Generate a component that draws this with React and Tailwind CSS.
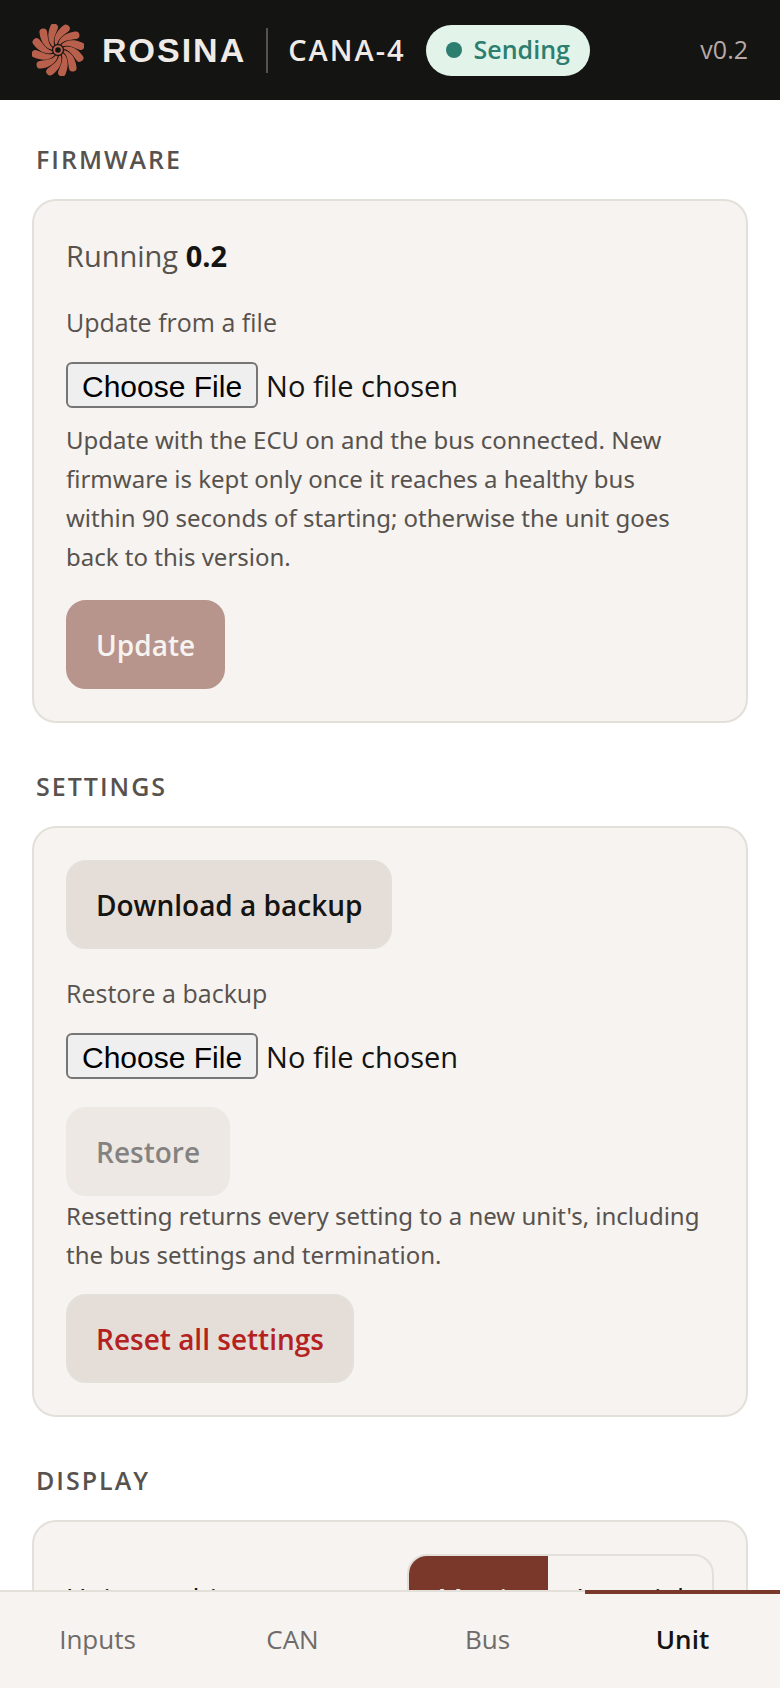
import { useState } from 'react'

const TABS = ['Inputs', 'CAN', 'Bus', 'Unit']
const PETALS = [0, 30, 60, 90, 120, 150, 180, 210, 240, 270, 300, 330]

function Logo() {
  return (
    <svg viewBox="-26 -26 52 52" className="w-[52px] h-[52px] shrink-0" aria-hidden="true">
      {PETALS.map((angle) => (
        <path
          key={angle}
          transform={`rotate(${angle})`}
          fill="#b8604c"
          d="M0.3 -6.2 C1.5 -12 7 -17.2 16.900 -18.500 A3.800 3.800 0 0 1 18.300 -10.900 C11 -10 6 -9.600 2.200 -5.600 Z"
        />
      ))}
      <circle r="3.800" fill="#141412" stroke="#b8604c" strokeWidth="2" />
    </svg>
  )
}

function Section({ title, children }) {
  return (
    <section className="mb-11">
      <h2 className="px-1 mb-5 text-[25px] leading-[39px] font-semibold tracking-[2px] uppercase text-[#57524e]">
        {title}
      </h2>
      <div className="p-8 border-2 border-[#e3e0da] rounded-3xl bg-[#f6f3f0]">
        {children}
      </div>
    </section>
  )
}

function FileField({ id, label }) {
  return (
    <div>
      <label htmlFor={id} className="block mb-5 text-[25px] leading-[39px] text-[#57524e]">
        {label}
      </label>
      <input
        id={id}
        type="file"
        className="block w-full h-[46px] text-[29px] text-[#141412] file:h-[46px] file:mr-2 file:px-[14px] file:pb-1 file:border-2 file:border-solid file:border-[#767676] file:rounded-md file:bg-[#efefef] file:font-['Liberation_Sans',sans-serif] file:text-[30px] file:text-black"
      />
    </div>
  )
}

function Hint({ className, children }) {
  return (
    <p className={`pr-2 font-['Noto_Sans',sans-serif] text-2xl leading-[39px] text-[#57524e] ${className}`}>
      {children}
    </p>
  )
}

function Button({ className, ...props }) {
  return (
    <button
      type="button"
      className={`block h-[89px] px-7 border-2 rounded-[20px] text-[28px] font-semibold disabled:opacity-50 ${className}`}
      {...props}
    />
  )
}

export default function App() {
  const [tab, setTab] = useState('Unit')
  const [units, setUnits] = useState('Metric')

  return (
    <div className="flex flex-col h-screen bg-white text-[#141412] font-['Open_Sans','Noto_Sans',sans-serif]">
      <header className="flex items-center h-[100px] px-8 shrink-0 bg-[#141412] text-[#f0ebe6]">
        <Logo />
        <span className="ml-[18px] font-['Liberation_Sans',sans-serif] text-[34px] font-bold tracking-[2px]">
          ROSINA
        </span>
        <span className="w-[2px] h-[45px] mx-5 bg-[#57524e]" />
        <span className="text-[29px] font-semibold tracking-[2px]">CANA-4</span>
        <span className="flex items-center gap-3 h-[51px] ml-5 px-5 rounded-full bg-[#e2f4ea] text-[25px] font-semibold text-[#2c7f70]">
          <span className="size-4 rounded-full bg-[#2c7f70]" />
          Sending
        </span>
        <span className="ml-auto text-[25px] text-[#b8a9a6]">v0.2</span>
      </header>

      <main className="flex-1 min-h-0 px-8 pt-10 overflow-y-auto [scrollbar-width:none]">
        <Section title="Firmware">
          <p className="mb-6 text-[29px] leading-[46px] text-[#57524e]">
            Running <strong className="font-bold text-[#141412]">0.2</strong>
          </p>
          <FileField id="firmware-file" label="Update from a file" />
          <Hint className="mt-3 mb-6">
            Update with the ECU on and the bus connected. New firmware is kept only once it
            reaches a healthy bus within 90 seconds of starting; otherwise the unit goes back
            to this version.
          </Hint>
          <Button disabled className="border-[#7a382b] bg-[#7a382b] text-[#f6f3f0]">Update</Button>
        </Section>

        <Section title="Settings">
          <Button className="mb-[25px] border-[#e3e0da] bg-[#e5ded8]">Download a backup</Button>
          <FileField id="backup-file" label="Restore a backup" />
          <Button disabled className="mt-7 border-[#e3e0da] bg-[#e5ded8]">Restore</Button>
          <Hint className="mb-5">
            Resetting returns every setting to a new unit's, including the bus settings and
            termination.
          </Hint>
          <Button className="border-[#e3e0da] bg-[#e5ded8] text-[#b4211f]">Reset all settings</Button>
        </Section>

        <Section title="Display">
          <div className="flex items-center justify-between">
            <span id="units-label" className="text-[28px]">Units on this page</span>
            <div
              role="group"
              aria-labelledby="units-label"
              className="flex h-[88px] border-2 border-[#e3e0da] rounded-[20px] overflow-hidden"
            >
              {['Metric', 'Imperial'].map((name) => (
                <button
                  key={name}
                  type="button"
                  aria-pressed={units === name}
                  onClick={() => setUnits(name)}
                  className={`px-7 text-[28px] ${units === name ? 'bg-[#7a382b] text-[#f6f3f0]' : ''}`}
                >
                  {name}
                </button>
              ))}
            </div>
          </div>
        </Section>
      </main>

      <nav className="grid grid-cols-4 h-[98px] shrink-0 bg-[#f6f3f0]">
        {TABS.map((name) => (
          <button
            key={name}
            type="button"
            onClick={() => setTab(name)}
            className={`text-[26px] ${
              tab === name
                ? 'pb-1 border-t-4 border-[#7a382b] font-semibold'
                : 'pb-0.5 border-t-2 border-[#e3e0da] text-[#6f6b69]'
            }`}
          >
            {name}
          </button>
        ))}
      </nav>
    </div>
  )
}
